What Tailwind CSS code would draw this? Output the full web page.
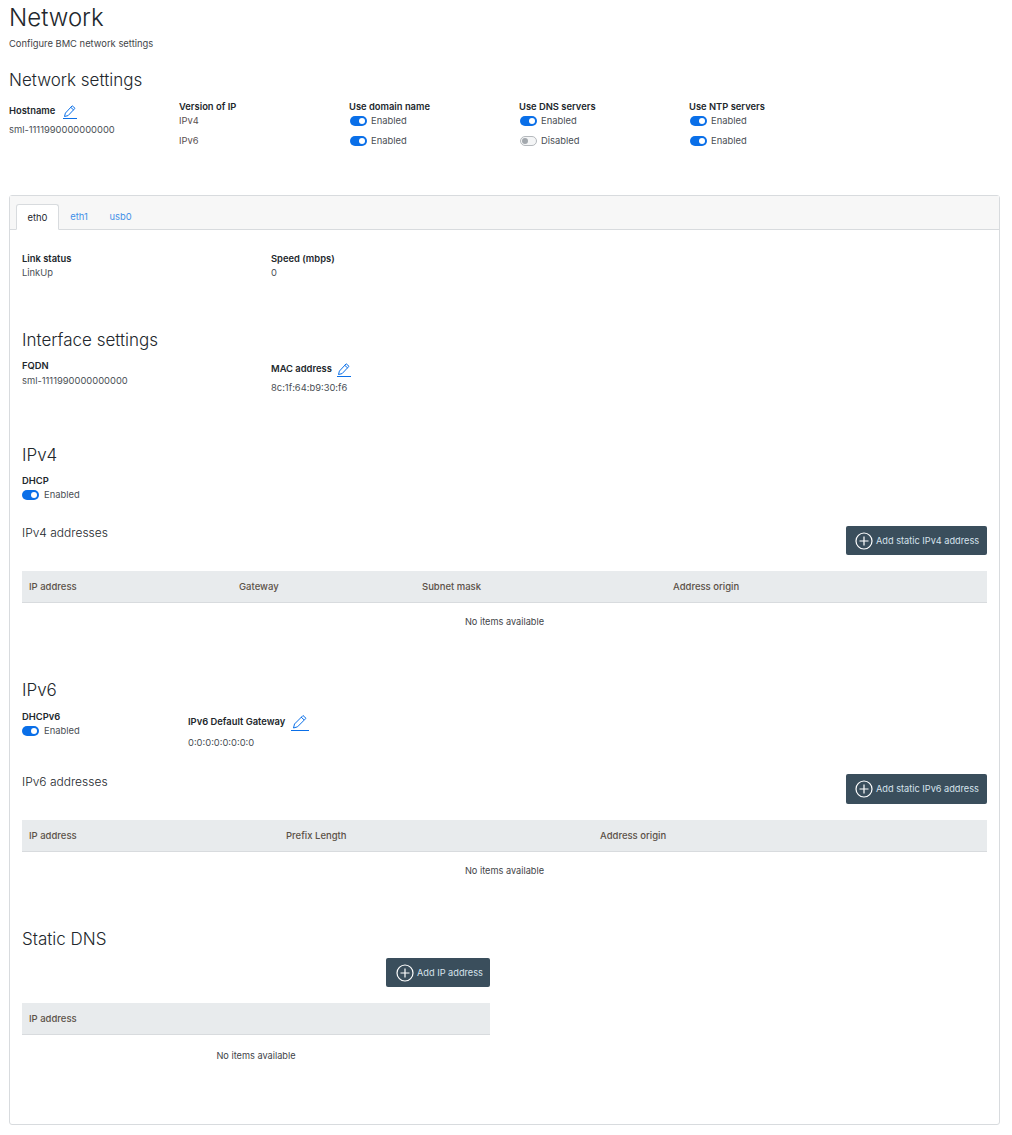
<!DOCTYPE html>
<html lang="en">
<head>
  <meta charset="UTF-8">
  <title>Network</title>
  <script src="https://cdn.jsdelivr.net/npm/@tailwindcss/browser@4"></script>
</head>
<body class="bg-white font-['Inter',sans-serif] text-[9.4px] leading-[14px] text-[#4a4f55]">
  <main class="w-[1012px] h-[1135px] overflow-hidden px-[9px] pt-[6px]">
    <h1 class="text-[24px] leading-[24px] font-light text-[#22272c]">Network</h1>
    <p class="mt-[7px] text-[#3f4448]">Configure BMC network settings</p>

    <h2 class="mt-[18px] text-[17px] leading-[22px] font-light text-[#22272c]">Network settings</h2>

    <!-- Global settings -->
    <div class="mt-[9px] flex">
      <div class="w-[170px]">
        <div class="flex items-center gap-[8px] h-[18px] mt-[2px]">
          <span class="font-semibold text-[#22272c]">Hostname</span>
          <svg class="w-[14px] h-[15px] text-[#0a6fe8]" viewBox="0 0 14 15" fill="none" stroke="currentColor"><path d="M0 14.500h14"/><path d="M1.500 12.500l.9-3.400 6.800-7.300 2.800 2.500-6.900 7.300z"/><path d="M7.800 3.400l2.800 2.500"/></svg>
        </div>
        <p class="mt-[3px]">sml-1111990000000000</p>
      </div>
      <div class="w-[170px]">
        <p class="font-semibold text-[#22272c]">Version of IP</p>
        <p class="-mt-px h-[20px] leading-[15px] text-[#5a5050]">IPv4</p>
        <p class="h-[20px] leading-[15px] text-[#5a5050]">IPv6</p>
      </div>
      <div class="w-[170px]">
        <p class="font-semibold text-[#22272c]">Use domain name</p>
        <div class="-mt-[3px] ml-px flex items-center gap-[4px] h-[20px]">
          <span class="w-[17px] h-[10px] rounded-full bg-[#0a6fe8] flex justify-end items-center pr-[2px]"><span class="w-[6px] h-[6px] rounded-full bg-white"></span></span><span>Enabled</span>
        </div>
        <div class="ml-px flex items-center gap-[4px] h-[19px]">
          <span class="w-[17px] h-[10px] rounded-full bg-[#0a6fe8] flex justify-end items-center pr-[2px]"><span class="w-[6px] h-[6px] rounded-full bg-white"></span></span><span>Enabled</span>
        </div>
      </div>
      <div class="w-[170px]">
        <p class="font-semibold text-[#22272c]">Use DNS servers</p>
        <div class="-mt-[3px] ml-px flex items-center gap-[4px] h-[20px]">
          <span class="w-[17px] h-[10px] rounded-full bg-[#0a6fe8] flex justify-end items-center pr-[2px]"><span class="w-[6px] h-[6px] rounded-full bg-white"></span></span><span>Enabled</span>
        </div>
        <div class="ml-px flex items-center gap-[4px] h-[19px]">
          <span class="w-[17px] h-[10px] rounded-full border border-[#b5b9bd] bg-[#f4f5f6] flex items-center pl-[1px]"><span class="w-[6px] h-[6px] rounded-full bg-[#a3a8ad]"></span></span><span>Disabled</span>
        </div>
      </div>
      <div class="w-[170px]">
        <p class="font-semibold text-[#22272c]">Use NTP servers</p>
        <div class="-mt-[3px] ml-px flex items-center gap-[4px] h-[20px]">
          <span class="w-[17px] h-[10px] rounded-full bg-[#0a6fe8] flex justify-end items-center pr-[2px]"><span class="w-[6px] h-[6px] rounded-full bg-white"></span></span><span>Enabled</span>
        </div>
        <div class="ml-px flex items-center gap-[4px] h-[19px]">
          <span class="w-[17px] h-[10px] rounded-full bg-[#0a6fe8] flex justify-end items-center pr-[2px]"><span class="w-[6px] h-[6px] rounded-full bg-white"></span></span><span>Enabled</span>
        </div>
      </div>
    </div>

    <!-- Interface card -->
    <section class="mt-[42px] w-[991px] h-[930px] border border-[#d8dbde] rounded-[3px]">
      <div class="h-[34px] bg-[#f7f7f7] border-b border-[#d8dbde] flex items-end pl-[6px]">
        <a class="w-[43px] h-[26px] pt-px -mb-px bg-white border border-[#d8dbde] border-b-white rounded-t-[3px] flex items-center justify-center text-[#22272c]">eth0</a>
        <a class="w-[40px] h-[26px] pt-px flex items-center justify-center text-[#3f8fe8]">eth1</a>
        <a class="w-[43px] h-[26px] pt-px flex items-center justify-center text-[#3f8fe8]">usb0</a>
      </div>

      <div class="px-[12px]">
        <div class="mt-[22px] flex">
          <div class="w-[249px]">
            <p class="font-semibold text-[#22272c]">Link status</p>
            <p>LinkUp</p>
          </div>
          <div>
            <p class="font-semibold text-[#22272c]">Speed (mbps)</p>
            <p>0</p>
          </div>
        </div>

        <h2 class="mt-[49px] text-[17px] leading-[22px] font-light text-[#22272c]">Interface settings</h2>
        <div class="mt-[8px] flex">
          <div class="w-[249px]">
            <p class="font-semibold text-[#22272c]">FQDN</p>
            <p class="mt-[1px]">sml-1111990000000000</p>
          </div>
          <div>
            <div class="mt-[1px] flex items-center gap-[5px] h-[18px]">
              <span class="font-semibold text-[#22272c]">MAC address</span>
              <svg class="w-[14px] h-[15px] text-[#0a6fe8]" viewBox="0 0 14 15" fill="none" stroke="currentColor"><path d="M0 14.500h14"/><path d="M1.500 12.500l.9-3.400 6.800-7.300 2.800 2.500-6.900 7.300z"/><path d="M7.800 3.400l2.800 2.500"/></svg>
            </div>
            <p class="mt-[3px]">8c:1f:64:b9:30:f6</p>
          </div>
        </div>

        <h2 class="mt-[49px] text-[17px] leading-[22px] font-light text-[#22272c]">IPv4</h2>
        <p class="mt-[8px] font-semibold text-[#22272c]">DHCP</p>
        <div class="flex items-center gap-[5px] h-[14px]">
          <span class="w-[17px] h-[10px] rounded-full bg-[#0a6fe8] flex justify-end items-center pr-[2px]"><span class="w-[6px] h-[6px] rounded-full bg-white"></span></span><span>Enabled</span>
        </div>

        <div class="mt-[24px] flex justify-between items-start">
          <h3 class="-mt-px text-[12px] leading-[16px] font-light text-[#22272c]">IPv4 addresses</h3>
          <button class="w-[141px] h-[29px] bg-[#3a4e5c] rounded-[2px] flex items-center pl-[9px] gap-[3px] text-[9.2px] text-[#d7e3ec]">
            <svg class="w-[18px] h-[18px] shrink-0" viewBox="0 0 18 18" fill="none" stroke="#fff" stroke-width="1.200"><circle cx="9" cy="9" r="8"/><path d="M9 4.500v9M4.500 9h9"/></svg>
            <span>Add static IPv4 address</span>
          </button>
        </div>
        <div class="mt-[16px] h-[32px] pt-px bg-[#e8ebed] border-b border-[#d8dbde] flex items-center font-medium text-[9.5px] text-[#5b5148]">
          <span class="w-[217px] pl-[7px]">IP address</span>
          <span class="w-[183px]">Gateway</span>
          <span class="w-[251px]">Subnet mask</span>
          <span>Address origin</span>
        </div>
        <p class="mt-[12px] text-center text-[9.2px] text-[#3f4448]">No items available</p>

        <h2 class="mt-[50px] text-[17px] leading-[22px] font-light text-[#22272c]">IPv6</h2>
        <div class="mt-[9px] flex">
          <div class="w-[166px]">
            <p class="font-semibold text-[#22272c]">DHCPv6</p>
            <div class="flex items-center gap-[5px] h-[14px]">
              <span class="w-[17px] h-[10px] rounded-full bg-[#0a6fe8] flex justify-end items-center pr-[2px]"><span class="w-[6px] h-[6px] rounded-full bg-white"></span></span><span>Enabled</span>
            </div>
          </div>
          <div>
            <div class="mt-[3px] flex items-center gap-[6px] h-[18px]">
              <span class="font-semibold text-[#22272c]">IPv6 Default Gateway</span>
              <svg class="w-[18px] h-[17px] text-[#0a6fe8]" viewBox="0 0 18 17" fill="none" stroke="currentColor"><path d="M0 16.500h18"/><path d="M2.500 14l1-4 8.500-8.500 3 2.800-8.500 8.500z"/><path d="M10 3l3 2.800"/></svg>
            </div>
            <p class="mt-[5px]">0:0:0:0:0:0:0:0</p>
          </div>
        </div>

        <div class="mt-[24px] flex justify-between items-start">
          <h3 class="text-[12px] leading-[16px] font-light text-[#22272c]">IPv6 addresses</h3>
          <button class="w-[141px] h-[30px] bg-[#3a4e5c] rounded-[2px] flex items-center pl-[9px] gap-[3px] text-[9.2px] text-[#d7e3ec]">
            <svg class="w-[18px] h-[18px] shrink-0" viewBox="0 0 18 18" fill="none" stroke="#fff" stroke-width="1.200"><circle cx="9" cy="9" r="8"/><path d="M9 4.500v9M4.500 9h9"/></svg>
            <span>Add static IPv6 address</span>
          </button>
        </div>
        <div class="mt-[16px] h-[32px] pt-px bg-[#e8ebed] border-b border-[#d8dbde] flex items-center font-medium text-[9.5px] text-[#5b5148]">
          <span class="w-[264px] pl-[7px]">IP address</span>
          <span class="w-[314px]">Prefix Length</span>
          <span>Address origin</span>
        </div>
        <p class="mt-[12px] text-center text-[9.2px] text-[#3f4448]">No items available</p>

        <h2 class="mt-[50px] text-[17px] leading-[22px] font-light text-[#22272c]">Static DNS</h2>
        <div class="w-[468px]">
          <div class="mt-[8px] flex justify-end">
            <button class="w-[104px] h-[29px] bg-[#3a4e5c] rounded-[2px] flex items-center pl-[10px] gap-[3px] text-[9.2px] text-[#d7e3ec]">
              <svg class="w-[18px] h-[18px] shrink-0" viewBox="0 0 18 18" fill="none" stroke="#fff" stroke-width="1.200"><circle cx="9" cy="9" r="8"/><path d="M9 4.500v9M4.500 9h9"/></svg>
              <span>Add IP address</span>
            </button>
          </div>
          <div class="mt-[16px] h-[32px] pt-px bg-[#e8ebed] border-b border-[#d8dbde] flex items-center font-medium text-[9.5px] text-[#5b5148]">
            <span class="pl-[7px]">IP address</span>
          </div>
          <p class="mt-[14px] text-center text-[9.2px] text-[#3f4448]">No items available</p>
        </div>
      </div>
    </section>
  </main>
</body>
</html>
